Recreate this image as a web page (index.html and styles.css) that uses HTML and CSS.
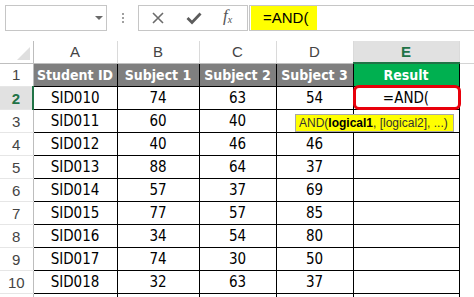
FILE: index.html
```html
<!DOCTYPE html>
<html>
<head>
    <title>AND function</title>
    <link rel="stylesheet" href="styles.css">
</head>
<body>
    <div class="formula-bar">
        <div class="name-box"><span class="drop-arrow"></span></div>
        <div class="grip"><i></i><i></i><i></i></div>
        <div class="fx-box">
            <svg class="icon" width="14" height="14" viewBox="0 0 14 14">
                <path d="M2 2 L12 12 M12 2 L2 12" stroke="#6b6b6b" stroke-width="1.6" fill="none"/>
            </svg>
            <svg class="icon" width="16" height="14" viewBox="0 0 16 14">
                <path d="M1.5 7 L6 11.5 L14.5 2.5" stroke="#5c5c5c" stroke-width="2.8" fill="none"/>
            </svg>
            <span class="fx">f<sub>x</sub></span>
        </div>
        <div class="formula-input"><span class="formula-text">=AND(</span></div>
    </div>

    <div class="sheet">
        <table class="grid">
            <colgroup>
                <col class="c-row">
                <col class="c-a">
                <col class="c-b">
                <col class="c-c">
                <col class="c-d">
                <col class="c-e">
                <col class="c-rest">
            </colgroup>
            <tr class="col-heads">
                <th class="corner"><span class="corner-tri"></span></th>
                <th>A</th>
                <th>B</th>
                <th>C</th>
                <th>D</th>
                <th class="active-col">E</th>
                <th class="blank-head"></th>
            </tr>
            <tr>
                <td class="row-num">1</td>
                <td class="head">Student ID</td>
                <td class="head">Subject 1</td>
                <td class="head">Subject 2</td>
                <td class="head">Subject 3</td>
                <td class="head result">Result</td>
                <td class="out"></td>
            </tr>
            <tr>
                <td class="row-num active-row">2</td>
                <td>SID010</td><td>74</td><td>63</td><td>54</td>
                <td class="editing"><span class="edit-ring"></span>=AND(</td>
                <td class="out"></td>
            </tr>
            <tr>
                <td class="row-num">3</td>
                <td>SID011</td><td>60</td><td>40</td><td></td><td></td>
                <td class="out"></td>
            </tr>
            <tr>
                <td class="row-num">4</td>
                <td>SID012</td><td>40</td><td>46</td><td>46</td><td></td>
                <td class="out"></td>
            </tr>
            <tr>
                <td class="row-num">5</td>
                <td>SID013</td><td>88</td><td>64</td><td>37</td><td></td>
                <td class="out"></td>
            </tr>
            <tr>
                <td class="row-num">6</td>
                <td>SID014</td><td>57</td><td>37</td><td>69</td><td></td>
                <td class="out"></td>
            </tr>
            <tr>
                <td class="row-num">7</td>
                <td>SID015</td><td>77</td><td>57</td><td>85</td><td></td>
                <td class="out"></td>
            </tr>
            <tr>
                <td class="row-num">8</td>
                <td>SID016</td><td>34</td><td>54</td><td>80</td><td></td>
                <td class="out"></td>
            </tr>
            <tr>
                <td class="row-num">9</td>
                <td>SID017</td><td>74</td><td>30</td><td>50</td><td></td>
                <td class="out"></td>
            </tr>
            <tr>
                <td class="row-num">10</td>
                <td>SID018</td><td>32</td><td>63</td><td>37</td><td></td>
                <td class="out"></td>
            </tr>
            <tr>
                <td class="row-num"></td>
                <td></td><td></td><td></td><td></td><td></td>
                <td class="out"></td>
            </tr>
        </table>

        <div class="tooltip">AND(<b>logical1</b>, [logical2], ...)</div>
    </div>
</body>
</html>
```

FILE: styles.css
```css
body {
    margin: 0;
    background-color: #ffffff;
    font-family: "DejaVu Sans Condensed", "DejaVu Sans", sans-serif;
    overflow: hidden;
}

/* formula bar */

.formula-bar {
    display: flex;
    align-items: flex-start;
    height: 41px;
    padding-top: 5px;
    box-sizing: border-box;
}

.name-box {
    position: relative;
    width: 100px;
    height: 24px;
    margin-left: 5px;
    border: 1px solid #c6c6c6;
}

.drop-arrow {
    position: absolute;
    left: 89px;
    top: 10px;
    border-left: 4px solid transparent;
    border-right: 4px solid transparent;
    border-top: 4px solid #6a6a6a;
}

.grip {
    display: flex;
    flex-direction: column;
    gap: 2px;
    width: 3px;
    margin: 8px 13px 0 15px;
}

.grip i {
    display: block;
    width: 2px;
    height: 2px;
    background-color: #a0a0a0;
}

.fx-box {
    display: flex;
    align-items: center;
    width: 108px;
    height: 24px;
    border: 1px solid #c6c6c6;
    box-sizing: content-box;
}

.fx-box .icon:first-child {
    margin-left: 12px;
}

.fx-box .icon + .icon {
    margin-left: 21px;
}

.fx {
    margin-left: 21px;
    font-family: "Liberation Serif", serif;
    font-style: italic;
    font-size: 17px;
    line-height: 18px;
    color: #555555;
}

.fx sub {
    font-size: 10px;
    vertical-align: -2px;
}

.formula-input {
    flex: 1;
    height: 24px;
    margin-left: 1px;
    border: 1px solid #c6c6c6;
    border-right: none;
    padding-left: 1px;
}

.formula-text {
    display: inline-block;
    width: 54px;
    height: 24px;
    padding-left: 12px;
    background-color: #ffff00;
    font-family: "Liberation Sans", sans-serif;
    font-size: 15px;
    line-height: 24px;
    color: #000000;
}

/* sheet */

.sheet {
    position: relative;
}

.grid {
    border-collapse: collapse;
    table-layout: fixed;
    width: 474px;
}

.c-row { width: 33px; }
.c-a { width: 84px; }
.c-b { width: 82px; }
.c-c { width: 77px; }
.c-d { width: 77px; }
.c-e { width: 106px; }
.c-rest { width: 15px; }

.grid td {
    height: 22px;
    padding: 0;
    border: 1px solid #000000;
    text-align: center;
    font-size: 15px;
    color: #000000;
    white-space: nowrap;
}

.col-heads th {
    height: 21px;
    padding: 0;
    border-left: 1px solid #dadada;
    border-right: 1px solid #dadada;
    border-bottom: 1px solid #bfbfbf;
    font-family: "Liberation Sans", sans-serif;
    font-weight: normal;
    font-size: 15px;
    color: #444444;
}

.col-heads .corner {
    position: relative;
    border-left: none;
    border-right: 1px solid #bdbdbd;
}

.corner-tri {
    position: absolute;
    right: 3px;
    bottom: 3px;
    border-left: 13px solid transparent;
    border-bottom: 13px solid #dfdfdf;
}

.col-heads .active-col {
    background-color: #e1e1e1;
    border-bottom: 2px solid #217346;
    color: #217346;
    font-weight: bold;
}

.col-heads .blank-head {
    border-right: none;
    border-bottom: 1px solid #d4d4d4;
}

.grid td.row-num {
    border: none;
    border-right: 1px solid #bdbdbd;
    border-bottom: 1px solid #e6e6e6;
    font-family: "Liberation Sans", sans-serif;
    font-size: 15px;
    color: #444444;
}

.grid td.active-row {
    background-color: #e1e1e1;
    border-right: 2px solid #217346;
    color: #217346;
    font-weight: bold;
}

.grid td.head {
    background-color: #7f7f7f;
    color: #ffffff;
    font-weight: bold;
    font-size: 14px;
}

.grid td.result {
    background-color: #00b050;
}

.grid td.out {
    border: none;
    border-left: 1px solid #000000;
}

.grid td.editing {
    position: relative;
}

.edit-ring {
    position: absolute;
    left: -1px;
    top: -2px;
    right: -2px;
    bottom: -1px;
    border: 3px solid #e8000b;
    border-radius: 6px;
}

.tooltip {
    position: absolute;
    left: 295px;
    top: 73px;
    width: 154px;
    height: 16px;
    padding-left: 3px;
    background-color: #ffff00;
    border: 1px solid #a8a8a8;
    font-family: "Liberation Sans", sans-serif;
    font-size: 12px;
    line-height: 16px;
    color: #333333;
    white-space: nowrap;
}

.tooltip b {
    color: #000000;
}
```
